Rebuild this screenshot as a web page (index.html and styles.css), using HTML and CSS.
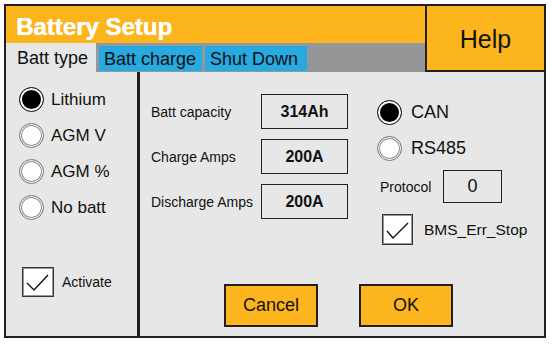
FILE: index.html
```html
<!DOCTYPE html>
<html>
<head>
<meta charset="utf-8">
<link rel="stylesheet" href="styles.css">
</head>
<body>
<div class="frame">
  <div class="top">
    <div class="top-left">
      <div class="title">Battery Setup</div>
      <div class="tabs">
        <div class="tab active">Batt type</div>
        <div class="tab blue charge">Batt charge</div>
        <div class="tab blue shut">Shut Down</div>
      </div>
    </div>
    <div class="help">Help</div>
  </div>
  <div class="body">
    <div class="left">
      <div class="radio-row"><span class="radio on"></span><span class="rlabel">Lithium</span></div>
      <div class="radio-row"><span class="radio"></span><span class="rlabel">AGM V</span></div>
      <div class="radio-row"><span class="radio"></span><span class="rlabel">AGM %</span></div>
      <div class="radio-row"><span class="radio"></span><span class="rlabel">No batt</span></div>
      <div class="check-row activate">
        <span class="check"><svg viewBox="0 0 30 28" width="30" height="28"><polyline points="4,15 11,22 25,7" fill="none" stroke="#111" stroke-width="1.4"/></svg></span>
        <span class="clabel">Activate</span>
      </div>
    </div>
    <div class="right">
      <div class="upper">
        <div class="fields">
          <div class="flabel">Batt capacity</div><div class="fval">314Ah</div>
          <div class="flabel">Charge Amps</div><div class="fval">200A</div>
          <div class="flabel">Discharge Amps</div><div class="fval">200A</div>
        </div>
        <div class="comm">
          <div class="radio-row"><span class="radio on"></span><span class="rlabel big">CAN</span></div>
          <div class="radio-row"><span class="radio"></span><span class="rlabel big">RS485</span></div>
          <div class="proto-row"><span class="plabel">Protocol</span><span class="pval">0</span></div>
          <div class="check-row bms">
            <span class="check"><svg viewBox="0 0 29 29" width="29" height="29"><polyline points="4,16 10,23 25,8" fill="none" stroke="#111" stroke-width="1.4"/></svg></span>
            <span class="clabel bmsl">BMS_Err_Stop</span>
          </div>
        </div>
      </div>
      <div class="buttons">
        <div class="btn">Cancel</div>
        <div class="btn">OK</div>
      </div>
    </div>
  </div>
</div>
</body>
</html>
```
FILE: styles.css
```css
* { box-sizing: border-box; }
body {
  margin: 0;
  background: #ffffff;
  font-family: "Liberation Sans", Arial, sans-serif;
  color: #111;
}
.frame {
  margin: 4px 0 0 4px;
  width: 542px;
  height: 334px;
  border: 2px solid #231f20;
  display: flex;
  flex-direction: column;
  background: #e6e7e6;
}
.top {
  display: flex;
  height: 66px;
}
.top-left {
  flex: 1;
  display: flex;
  flex-direction: column;
}
.title {
  height: 37px;
  background: #fdb51d;
  color: #fff;
  font-weight: bold;
  font-size: 24px;
  line-height: 37px;
  padding: 2px 0 0 10px;
  text-shadow: 0.4px 0 0 #fff;
}
.tabs {
  height: 29px;
  background: #959698;
  display: flex;
  align-items: flex-start;
}
.tab {
  font-size: 18px;
  color: #111;
}
.tab.active {
  width: 90px;
  height: 29px;
  background: #e6e7e6;
  padding-left: 11px;
  line-height: 30px;
}
.tab.blue {
  background: #27a9e1;
  height: 25px;
  margin-top: 3px;
  margin-left: 3px;
  padding-left: 5px;
  line-height: 26px;
}
.tab.charge { width: 103px; }
.tab.shut { width: 102px; }
.help {
  width: 119px;
  background: #fdb51d;
  border-left: 2px solid #231f20;
  border-bottom: 2px solid #231f20;
  display: flex;
  align-items: center;
  justify-content: center;
  font-size: 25px;
  padding-top: 2px;
}
.body {
  flex: 1;
  display: flex;
}
.left {
  width: 134px;
  border-right: 3px solid #231f20;
  padding: 9px 0 0 13px;
  display: flex;
  flex-direction: column;
}
.radio-row {
  height: 36px;
  display: flex;
  align-items: center;
}
.radio {
  width: 25px;
  height: 25px;
  border-radius: 50%;
  border: 1px solid #777;
  background: #fff;
  box-shadow: inset 0 0 0 1px #fff, inset 0 0 0 2px #888;
  flex: none;
}
.radio.on {
  border-color: #222;
  background: #000;
  box-shadow: inset 0 0 0 2px #fff;
}
.rlabel {
  font-size: 17px;
  margin-left: 7px;
  padding-top: 1px;
}
.rlabel.big {
  font-size: 18px;
  margin-left: 9px;
}
.check-row {
  display: flex;
  align-items: center;
}
.check {
  border: 1.5px solid #333;
  background: #fff;
  box-shadow: inset 0 0 0 1px #999;
  display: flex;
  align-items: center;
  justify-content: center;
}
.activate {
  margin-top: 42px;
  margin-left: 3px;
}
.activate .check {
  width: 32px;
  height: 30px;
}
.clabel {
  font-size: 14px;
  margin-left: 8px;
}
.right {
  flex: 1;
  display: flex;
  flex-direction: column;
}
.upper {
  display: flex;
  padding: 22px 0 0 11px;
}
.fields {
  display: grid;
  grid-template-columns: 110px 87px;
  grid-auto-rows: 35px;
  row-gap: 10px;
  align-items: center;
}
.flabel {
  font-size: 14px;
}
.fval {
  height: 35px;
  border: 1px solid #231f20;
  display: flex;
  align-items: center;
  justify-content: center;
  font-weight: bold;
  font-size: 16px;
}
.comm {
  margin-left: 29px;
  display: flex;
  flex-direction: column;
}
.proto-row {
  display: flex;
  align-items: center;
  margin-top: 4px;
  padding-left: 3px;
}
.plabel {
  width: 63px;
  font-size: 14px;
}
.pval {
  width: 59px;
  height: 33px;
  border: 1px solid #231f20;
  display: flex;
  align-items: center;
  justify-content: center;
  font-size: 18px;
}
.bms {
  margin-top: 11px;
  margin-left: 5px;
}
.bms .check {
  width: 31px;
  height: 31px;
}
.clabel.bmsl {
  font-size: 15.5px;
  margin-left: 11px;
}
.buttons {
  margin-top: auto;
  padding: 0 0 9px 84px;
  display: flex;
  gap: 41px;
}
.btn {
  width: 94px;
  height: 43px;
  background: #fdb51d;
  border: 2px solid #231f20;
  display: flex;
  align-items: center;
  justify-content: center;
  font-size: 18px;
}
```
